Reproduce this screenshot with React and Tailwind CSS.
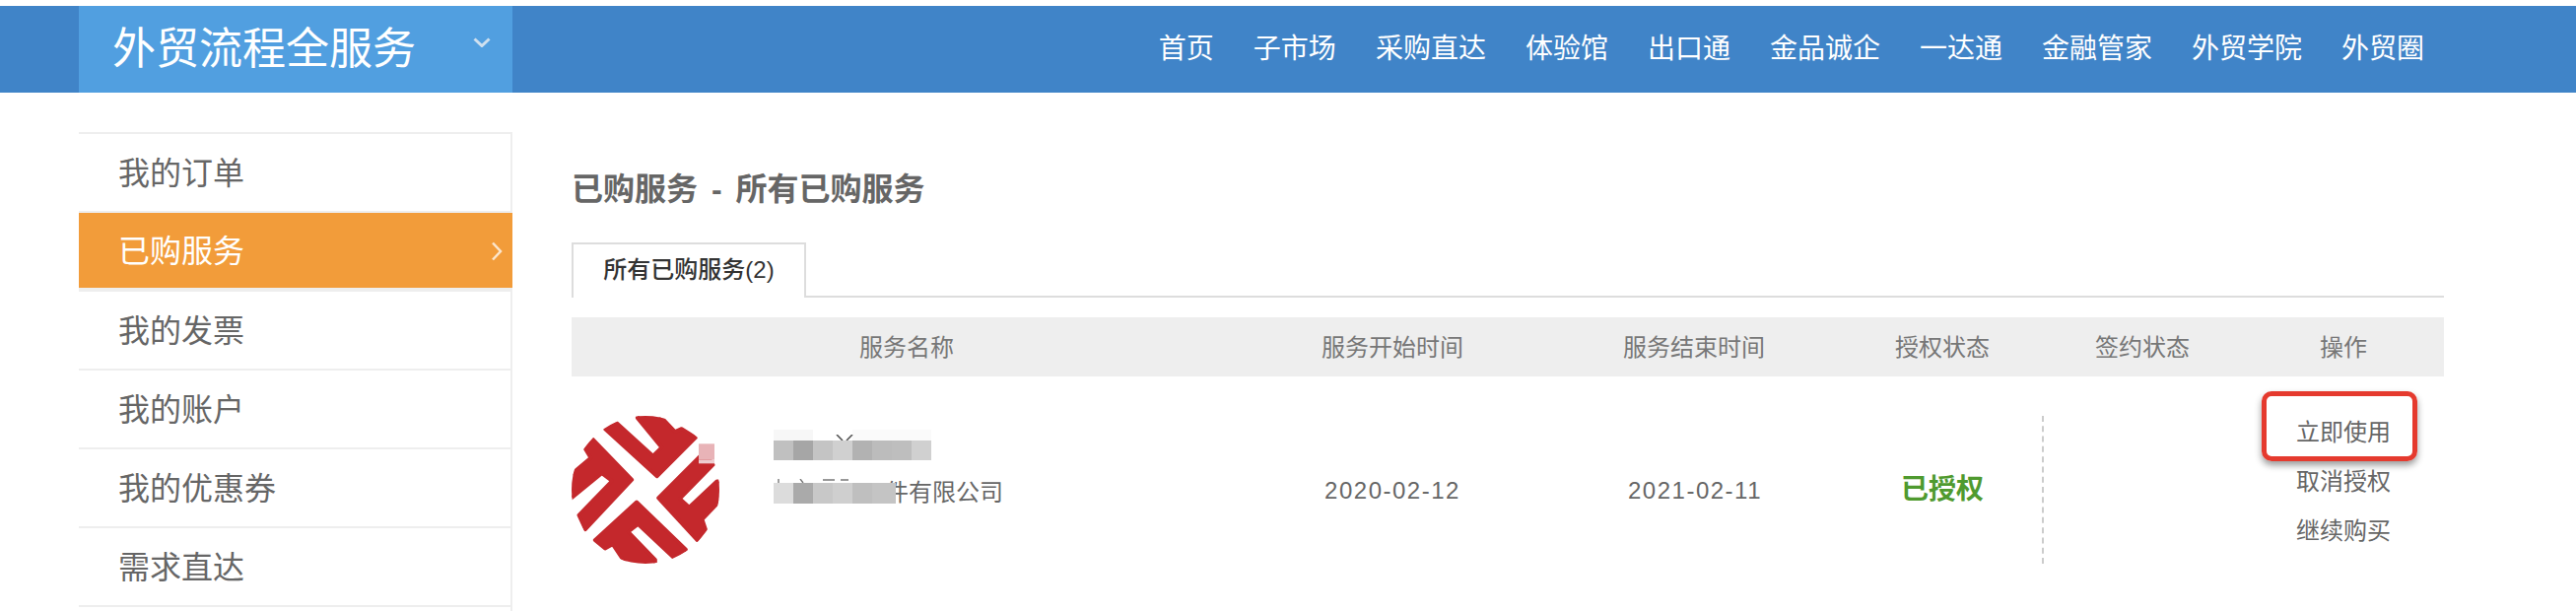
import React from 'react';

const font = { fontFamily: '"Liberation Sans", "Noto Sans CJK SC", sans-serif' };

const navItems = ['首页', '子市场', '采购直达', '体验馆', '出口通', '金品诚企', '一达通', '金融管家', '外贸学院', '外贸圈'];
const sideItems = ['我的订单', '已购服务', '我的发票', '我的账户', '我的优惠券', '需求直达'];
const columns = 'grid grid-cols-[678px_310px_302px_202px_204px_204px]';

const Logo = () => (
  <svg viewBox="30 30 450 450" className="w-[150px] h-[150px] shrink-0">
    <defs>
      <clipPath id="logo-circle">
        <circle cx="255" cy="255" r="225" />
      </clipPath>
    </defs>
    <g clipPath="url(#logo-circle)" fill="#c4282c" stroke="#c4282c" strokeWidth="11" strokeLinejoin="round">
      <polygon points="132,70 165,49 278,152 304,126 230,36 232,20 290,20 345,78 365,69 408,96 290,214" />
      <polygon points="95,101 214,224 72,376 52,332 153,228 122,205 20,288 20,215 88,158 69,126" />
      <polygon points="228,292 378,437 340,461 232,360 203,383 285,468 285,500 208,500 155,421 132,434 101,408" />
      <polygon points="294,280 425,149 465,175 360,282 388,308 472,229 500,230 500,270 428,345 438,375 412,408" />
    </g>
    <rect x="417" y="115" width="48" height="49" fill="#e8b3b7" />
    <rect x="417" y="164" width="48" height="11" fill="#eecdd0" />
  </svg>
);

const MosaicCell = ({ className }) => <div className={`w-5 ${className}`} />;

const ServiceName = () => (
  <div className="flex flex-col gap-[18px] pt-[25px] pl-[55px]">
    <div className="relative flex w-[160px] h-5">
      <MosaicCell className="bg-[#c0c0c0]" />
      <MosaicCell className="bg-[#a6a6a6]" />
      <MosaicCell className="bg-[#c4c4c4]" />
      <MosaicCell className="bg-[#d0d0d0]" />
      <MosaicCell className="bg-[#b2b2b2]" />
      <MosaicCell className="bg-[#bcbcbc]" />
      <MosaicCell className="bg-[#bebebe]" />
      <MosaicCell className="bg-[#d0d0d0]" />
      <div className="absolute left-0 top-[-11px] w-10 h-[11px] bg-[#f7f7f7]" />
      <div className="absolute right-0 top-[-11px] w-[80px] h-[11px] bg-[#fafafa]" />
      <svg viewBox="0 0 20 6" className="absolute left-[62px] top-[-6px] w-5 h-[6px]">
        <path d="M2 0l6 6M18 0l-6 6" stroke="#555" strokeWidth="1.6" fill="none" />
      </svg>
    </div>
    <div className="relative h-[30px] pl-[113px] text-[24px] leading-[30px] text-[#666]">
      件有限公司
      <div className="absolute left-0 top-[5px] flex h-[21px]">
        <MosaicCell className="bg-[#dcdcdc]" />
        <MosaicCell className="bg-[#aaaaaa]" />
        <MosaicCell className="bg-[#c8c8c8]" />
        <MosaicCell className="bg-[#cfcfcf]" />
        <MosaicCell className="bg-[#bfbfbf]" />
        <div className="w-6 bg-[#c4c4c4]" />
      </div>
      <svg viewBox="0 0 80 4" className="absolute left-0 top-[1px] w-[80px] h-1">
        <path d="M5 0v4M27 0l3 4M50 1h12M68 1h8" stroke="#777" strokeWidth="1.4" fill="none" />
      </svg>
    </div>
  </div>
);

const App = () => {
  return (
    <div className="h-[620px] overflow-hidden bg-white pt-[6px] text-[#666]" style={font}>
      <header className="flex h-[88px] bg-[#4084c8] pl-[80px] pr-[154px]">
        <div className="flex w-[440px] items-center justify-between bg-[#519fe0] pl-[34px] pr-[22px] text-[44px] text-white">
          外贸流程全服务
          <svg viewBox="0 0 18 10" className="-mt-[14px] w-[18px] h-[10px]">
            <path d="M1.5 1.5 9 8.5l7.5-7" stroke="#cfe0ef" strokeWidth="3" fill="none" />
          </svg>
        </div>
        <nav className="ml-auto flex items-center gap-10 text-[28px] text-white">
          {navItems.map((item) => (
            <a key={item}>{item}</a>
          ))}
        </nav>
      </header>

      <div className="mt-10 flex pl-[80px]">
        <aside className="h-[486px] w-[440px] border-t-2 border-r-2 border-[#eeeeee]">
          {sideItems.map((item) => {
            const active = item === '已购服务';
            return (
              <div
                key={item}
                className={
                  active
                    ? '-mr-[2px] flex h-20 items-center justify-between border-b-4 border-[#eeeeee] bg-[#f29c3a] pl-10 pr-[10px] pt-[2px] text-[32px] text-white'
                    : 'flex h-20 items-center border-b-2 border-[#eeeeee] pl-10 pt-[2px] text-[32px] text-[#666]'
                }
              >
                {item}
                {active && (
                  <svg viewBox="0 0 12 20" className="w-3 h-5">
                    <path d="M2 1.5 10 10l-8 8.5" stroke="#fbe6cd" strokeWidth="2.5" fill="none" />
                  </svg>
                )}
              </div>
            );
          })}
        </aside>

        <main className="ml-[60px] w-[1900px]">
          <h1 className="mt-[38px] h-10 text-[32px] font-bold leading-10 text-[#666] [word-spacing:5px]">已购服务 - 所有已购服务</h1>

          <div className="mt-[34px] flex h-[56px] border-b-2 border-[#dddddd]">
            <div className="-mb-[2px] flex w-[238px] items-center justify-center border-x-2 border-t-2 border-[#dddddd] bg-white pb-[2px] text-[24px] font-medium text-[#333]">
              所有已购服务(2)
            </div>
          </div>

          <div className={`${columns} mt-5 h-[60px] items-center bg-[#eeeeee] pt-[2px] text-center text-[24px] text-[#777]`}>
            <div className="pl-[2px]">服务名称</div>
            <div>服务开始时间</div>
            <div>服务结束时间</div>
            <div>授权状态</div>
            <div>签约状态</div>
            <div>操作</div>
          </div>

          <div className={`${columns} mt-10 h-[150px] items-center text-center text-[24px] text-[#666]`}>
            <div className="flex h-full text-left">
              <Logo />
              <ServiceName />
            </div>
            <div className="pt-[2px] tracking-[1.5px]">2020-02-12</div>
            <div className="pt-[2px] pl-[2px] tracking-[1.5px]">2021-02-11</div>
            <div className="text-[28px] font-bold text-[#4f9a2f]">已授权</div>
            <div className="h-full border-l-2 border-dashed border-[#cccccc]" />
            <div className="-mt-[8px] flex flex-col self-start leading-[50px]">
              <div className="relative mx-auto">
                立即使用
                <div className="absolute -left-[35px] -right-[27px] -top-[17px] -bottom-[4px] rounded-[10px] border-[5px] border-[#e53a2e] shadow-[0_4px_7px_rgba(0,0,0,0.4)]" />
              </div>
              <div>取消授权</div>
              <div>继续购买</div>
            </div>
          </div>
        </main>
      </div>
    </div>
  );
};

export default App;
